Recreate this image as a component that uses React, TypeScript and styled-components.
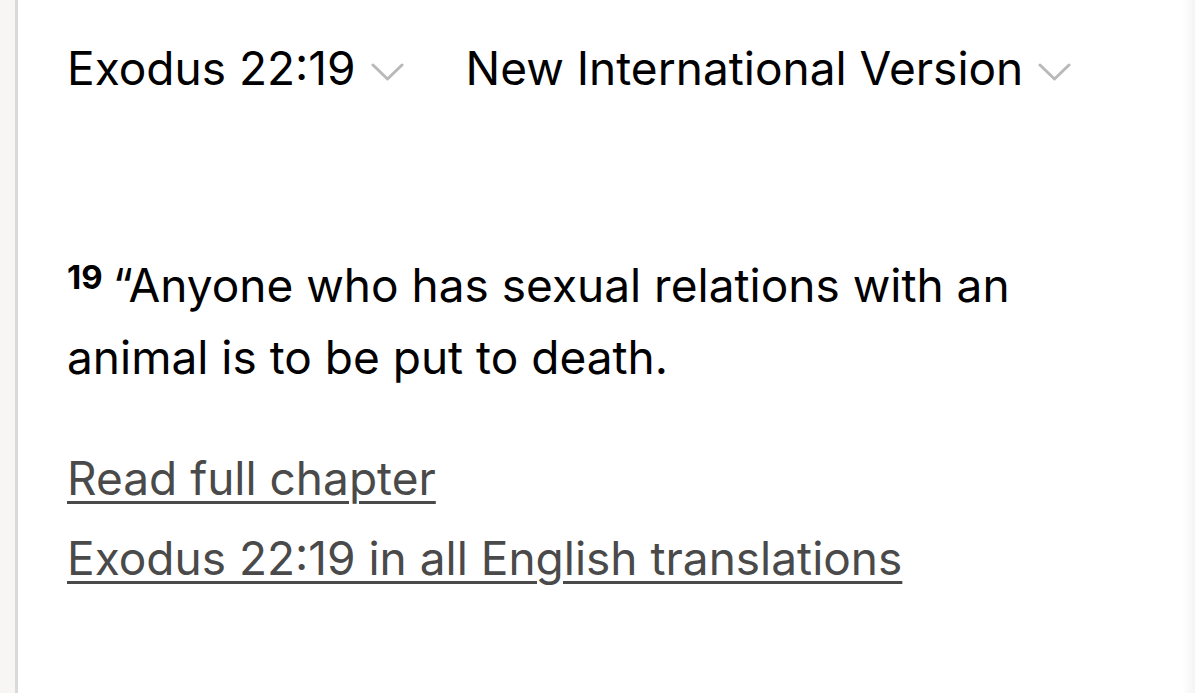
import styled, { createGlobalStyle } from 'styled-components'

const Global = createGlobalStyle`
  html, body {
    margin: 0;
    padding: 0;
    background: #fff;
  }
  body {
    font-family: Inter, "Liberation Sans", sans-serif;
    color: #000;
  }
`

const Page = styled.div`
  display: flex;
  width: 1195px;
  height: 693px;
  overflow: hidden;
`

const SideStrip = styled.div`
  width: 15px;
  flex-shrink: 0;
  background: #f7f6f4;
  border-right: 3px solid #dadada;
`

const Content = styled.main`
  flex: 1;
  padding: 32px 0 0 49px;
  background: linear-gradient(to left, #f4f4f4 0, #fdfdfd 10px, #fff 14px);
`

const Toolbar = styled.div`
  display: flex;
  align-items: center;
  gap: 62px;
  height: 72px;
`

const Picker = styled.div`
  display: flex;
  align-items: center;
  gap: 15px;
  font-size: 46px;
  line-height: 72px;
`

const Chevron = styled.svg`
  width: 33px;
  height: 18px;
  margin-top: 8px;
`

const Verse = styled.p`
  margin: 145px 0 0;
  font-size: 46px;
  line-height: 72px;
  width: 1010px;
`

const VerseNum = styled.b`
  font-size: 33px;
  font-weight: 700;
  vertical-align: 13px;
  line-height: 1;
  margin-right: 10px;
`

const Links = styled.div`
  display: flex;
  flex-direction: column;
  margin-top: 45px;
`

const TextLink = styled.a`
  font-size: 46px;
  line-height: 80px;
  color: #4a4a4a;
  text-decoration: underline;
  text-decoration-thickness: 2.5px;
  text-underline-offset: 6px;
  width: fit-content;
`

function Caret() {
  return (
    <Chevron viewBox="0 0 33 18">
      <polyline points="2,2 16.5,16 31,2" fill="none" stroke="#b9b9b9" strokeWidth="3" strokeLinecap="round" strokeLinejoin="round" />
    </Chevron>
  )
}

export default function App() {
  return (
    <Page>
      <Global />
      <SideStrip />
      <Content>
        <Toolbar>
          <Picker>
            Exodus 22:19
            <Caret />
          </Picker>
          <Picker>
            New International Version
            <Caret />
          </Picker>
        </Toolbar>
        <Verse>
          <VerseNum>19</VerseNum>“Anyone who has sexual relations with an animal is to be put to death.
        </Verse>
        <Links>
          <TextLink href="#">Read full chapter</TextLink>
          <TextLink href="#">Exodus 22:19 in all English translations</TextLink>
        </Links>
      </Content>
    </Page>
  )
}
